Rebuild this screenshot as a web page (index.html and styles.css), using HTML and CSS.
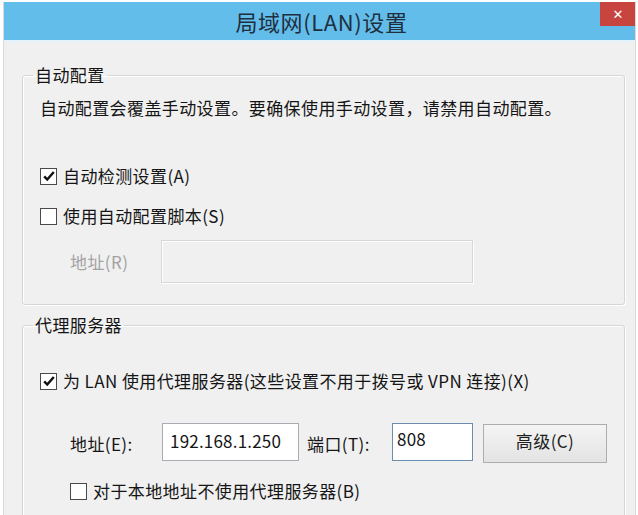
FILE: index.html
```html
<!DOCTYPE html>
<html lang="zh-CN">
<head>
  <meta charset="UTF-8" />
  <meta name="viewport" content="width=device-width, initial-scale=1.0" />
  <title>局域网(LAN)设置</title>
  <link rel="stylesheet" href="styles.css">
</head>
<body>
  <div class="window">
    <div class="titlebar">
      <span class="title">局域网(LAN)设置</span>
      <button type="button" class="close">✕</button>
    </div>

    <div class="content">
      <fieldset class="group auto">
        <legend>自动配置</legend>
        <p class="desc">自动配置会覆盖手动设置。要确保使用手动设置，请禁用自动配置。</p>

        <label class="check first">
          <span class="box"><svg viewBox="0 0 16 16" width="14" height="14"><path d="M2.5 8.5 L6 12 L13.5 3.5" fill="none" stroke="#111" stroke-width="2.8"/></svg></span>
          自动检测设置(A)
        </label>
        <label class="check second">
          <span class="box"></span>
          使用自动配置脚本(S)
        </label>

        <div class="row script">
          <span class="field-label disabled">地址(R)</span>
          <span class="input wide off"></span>
        </div>
      </fieldset>

      <fieldset class="group proxy">
        <legend>代理服务器</legend>

        <label class="check">
          <span class="box"><svg viewBox="0 0 16 16" width="14" height="14"><path d="M2.5 8.5 L6 12 L13.5 3.5" fill="none" stroke="#111" stroke-width="2.8"/></svg></span>
          为 LAN 使用代理服务器(这些设置不用于拨号或 VPN 连接)(X)
        </label>

        <div class="row server">
          <span class="field-label">地址(E):</span>
          <span class="input addr">192.168.1.250</span>
          <span class="field-label port-label">端口(T):</span>
          <span class="input port">808</span>
          <button type="button" class="advanced">高级(C)</button>
        </div>

        <label class="check bypass">
          <span class="box"></span>
          对于本地地址不使用代理服务器(B)
        </label>
      </fieldset>
    </div>
  </div>
</body>
</html>
```

FILE: styles.css
```css
html, body {
  margin: 0;
  height: 100%;
  overflow: hidden;
}
body {
  background: #fff;
  font-family: "Noto Sans CJK SC", "Noto Sans", sans-serif;
  font-size: 17px;
  letter-spacing: 0.4px;
  color: #151515;
}
.window {
  margin: 2px 2px 0 3px;
  height: 513px;
  overflow: hidden;
  background: #f0f0f0;
  border-left: 1px solid #dadada;
  border-right: 1px solid #dadada;
}
.titlebar {
  position: relative;
  height: 38px;
  background: #63bdea;
  border-bottom: 2px solid #e3f2fb;
  display: flex;
  justify-content: center;
  align-items: center;
}
.title {
  font-size: 22px;
  letter-spacing: 0.6px;
  color: #1f2f3d;
  padding-left: 4px;
}
.close {
  position: absolute;
  top: 0;
  right: -1px;
  width: 36px;
  height: 24px;
  border: none;
  background: #c8443e;
  color: #fff;
  font-size: 13px;
  font-weight: bold;
  padding: 0;
  font-family: "DejaVu Sans", sans-serif;
}
.content {
  padding: 0 10px 0 18px;
}
.group {
  margin: 0;
  border: 1px solid #d6d6d6;
  border-radius: 3px;
  box-shadow: inset 1px 1px 0 #fff, 1px 1px 0 #fff;
  padding: 0 16px 0 17px;
}
.group legend {
  padding: 0 2px;
  margin-left: -7px;
  line-height: 20px;
}
.auto {
  margin-top: 23px;
  padding-top: 11px;
  padding-bottom: 21px;
}
.proxy {
  margin-top: 10px;
  padding-top: 34px;
  height: 200px;
}
.desc {
  margin: 0;
  line-height: 24px;
}
.check {
  display: flex;
  align-items: center;
  gap: 6px;
  line-height: 24px;
}
.check.first {
  margin-top: 44px;
}
.check.second {
  margin-top: 16px;
}
.box {
  width: 15px;
  height: 15px;
  border: 1px solid #4a4a4a;
  background: #fff;
  display: flex;
  align-items: center;
  justify-content: center;
}
.row {
  display: flex;
  align-items: flex-start;
}
.script {
  margin-top: 12px;
  padding-left: 30px;
}
.field-label {
  width: 91px;
  align-self: center;
}
.disabled {
  color: #a3a3a3;
}
.input {
  box-sizing: border-box;
  background: #fff;
  border: 1px solid #a9acb2;
  height: 38px;
  line-height: 34px;
  padding: 0 6px;
  letter-spacing: 0.2px;
}
.input.off {
  background: #f0f0f0;
  border-color: #d7d7d7;
  box-shadow: inset 1px 1px 0 #fff, 1px 1px 0 #fff;
  height: 43px;
}
.wide {
  width: 312px;
}
.server {
  margin-top: 30px;
  padding-left: 30px;
}
.server .field-label {
  width: 92px;
}
.addr {
  width: 137px;
  padding-left: 7px;
}
.server .port-label {
  width: 85px;
  margin-left: 8px;
}
.port {
  width: 81px;
  border-color: #6d8db0;
  padding-left: 4px;
  line-height: 30px;
}
.advanced {
  margin: 1px 0 0 10px;
  width: 124px;
  height: 39px;
  border: 1px solid #adadad;
  background: linear-gradient(#f4f4f4, #e3e3e3);
  font-family: inherit;
  font-size: 17px;
  letter-spacing: 0.4px;
  color: #1e1e1e;
  padding: 0 0 6px;
}
.bypass {
  margin-top: 16px;
  padding-left: 30px;
}
```
